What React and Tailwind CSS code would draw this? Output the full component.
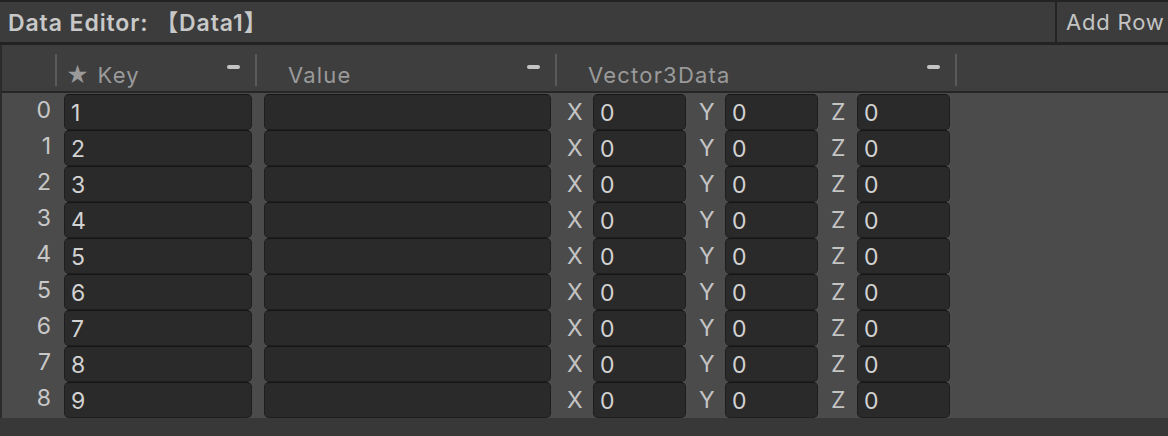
const rows = [1, 2, 3, 4, 5, 6, 7, 8, 9]

function Field({ className, children }) {
  return (
    <div
      className={`h-[36px] rounded-[5px] border border-[#1e1e1e] border-t-[#161616] bg-[#2a2a2a] pl-[6px] text-[23px] leading-[36px] tracking-[0.3px] text-[#d2d2d2] ${className}`}
    >
      {children}
    </div>
  )
}

function HeaderCell({ width, label, indent }) {
  return (
    <div className={`flex h-full items-start ${width}`}>
      <div className={`flex-1 pt-[14px] text-[22px] tracking-[1.2px] text-[#9a9a9a] ${indent}`}>{label}</div>
      <div className="mt-[20px] mr-[15px] h-[4px] w-[13px] rounded-[2px] bg-[#c4c4c4]" />
      <div className="mt-[9px] h-[32px] w-[2px] bg-[#5a5a5a]" />
    </div>
  )
}

export default function App() {
  return (
    <div className="flex h-[436px] w-[1168px] flex-col bg-[#383838] font-['Inter','Noto_Sans_CJK_SC',sans-serif]">
      {/* Toolbar */}
      <div className="flex h-[45px] border-t-2 border-b-[3px] border-[#232323] bg-[#3c3c3c]">
        <div className="flex-1 pl-[8px] text-[23px] leading-[42px] font-semibold tracking-[0.9px] text-[#c8c8c8]">
          Data Editor: 【Data1】
        </div>
        <div className="w-[113px] overflow-hidden whitespace-nowrap border-l-2 border-[#232323] pl-[9px] text-[22px] leading-[40px] tracking-[0.8px] text-[#c4c4c4]">
          Add Row
        </div>
      </div>

      {/* Table */}
      <div className="border-l-2 border-[#2b2b2b]">
        <div className="flex h-[48px] border-b-2 border-[#262626] bg-[#3e3e3e]">
          <div className="flex w-[55px] justify-end">
            <div className="mt-[9px] h-[32px] w-[2px] bg-[#5a5a5a]" />
          </div>
          <HeaderCell width="w-[200px]" label="★ Key" indent="pl-[9px]" />
          <HeaderCell width="w-[300px]" label="Value" indent="pl-[31px]" />
          <HeaderCell width="w-[400px]" label="Vector3Data" indent="pl-[31px]" />
        </div>

        <div className="bg-[#4b4b4b] pt-[1px]">
          {rows.map((n, i) => (
            <div key={n} className="flex h-[36px] items-start">
              <div className="w-[50px] pt-[3px] pr-[1px] text-right text-[23px] leading-[26px] text-[#c8c8c8]">
                {i}
              </div>
              <Field className="ml-[12px] w-[188px]">{n}</Field>
              <Field className="ml-[12px] w-[287px]" />
              <div className="flex items-center">
                <span className="ml-[16px] w-[26px] text-[23px] leading-[36px] text-[#c4c4c4]">X</span>
                <Field className="w-[93px]">0</Field>
                <span className="ml-[13px] w-[26px] text-[23px] leading-[36px] text-[#c4c4c4]">Y</span>
                <Field className="w-[93px]">0</Field>
                <span className="ml-[13px] w-[26px] text-[23px] leading-[36px] text-[#c4c4c4]">Z</span>
                <Field className="w-[93px]">0</Field>
              </div>
            </div>
          ))}
        </div>
      </div>
    </div>
  )
}
